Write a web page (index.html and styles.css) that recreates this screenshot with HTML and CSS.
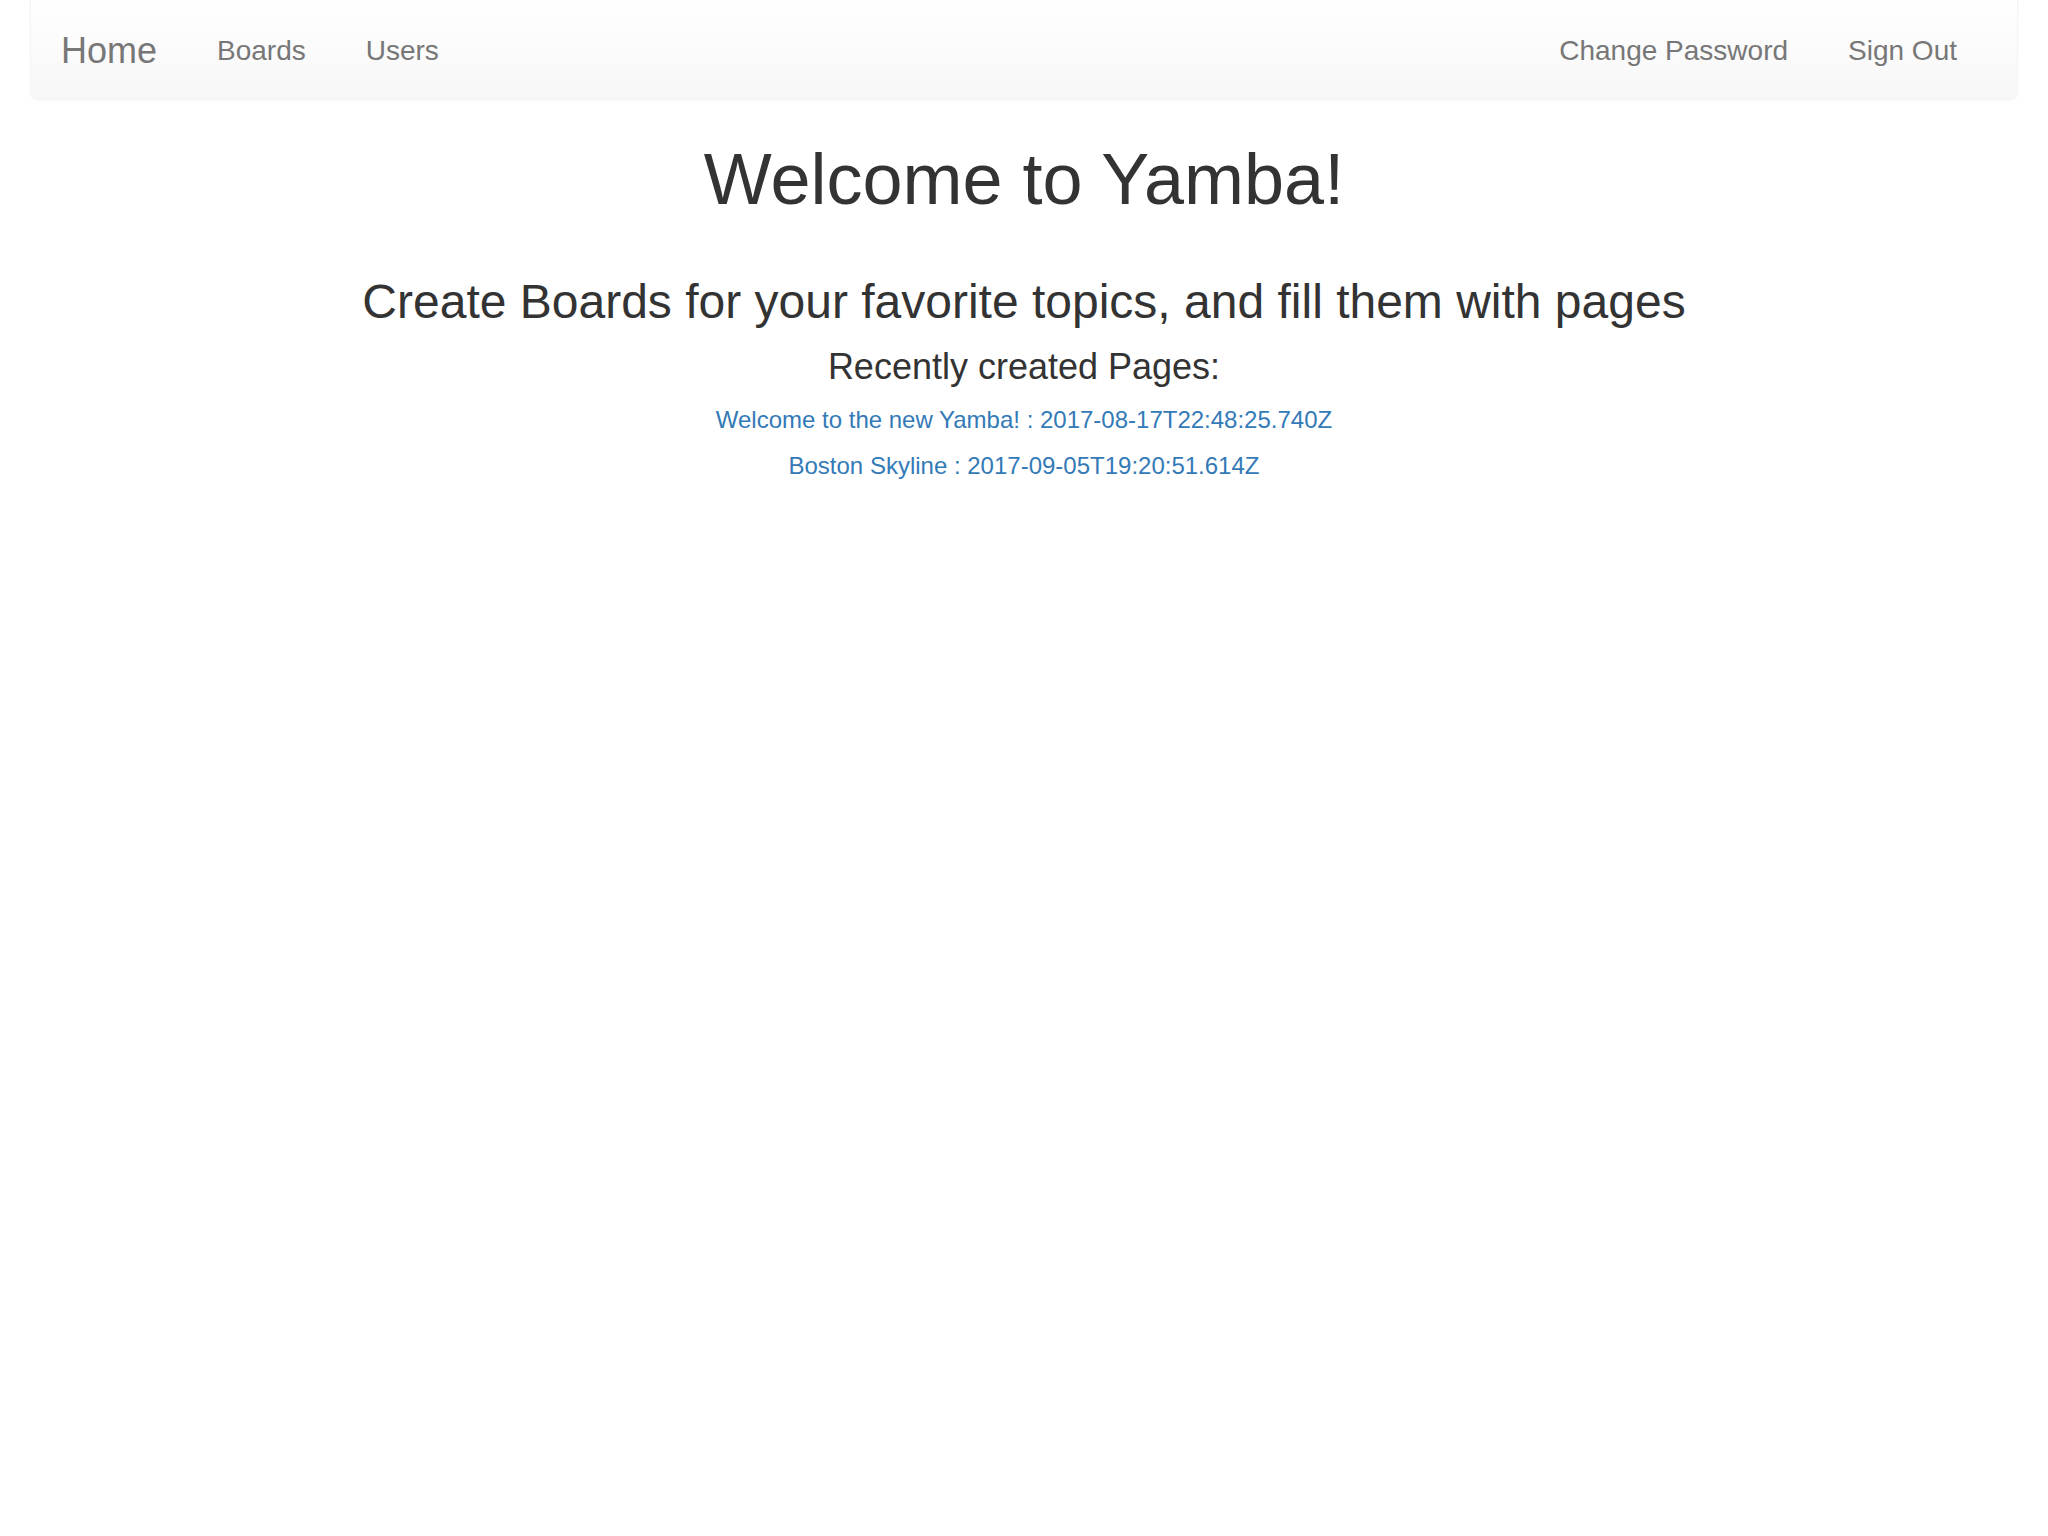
FILE: index.html
```html
<!DOCTYPE html>
<html>
<head>
<meta charset="utf-8">
<title>Yamba</title>
<link rel="stylesheet" href="styles.css">
</head>
<body>
<div class="page">
  <nav class="navbar">
    <div class="nav-left">
      <a class="brand" href="#">Home</a>
      <a class="nav-link" href="#">Boards</a>
      <a class="nav-link" href="#">Users</a>
    </div>
    <div class="nav-right">
      <a class="nav-link" href="#">Change Password</a>
      <a class="nav-link" href="#">Sign Out</a>
    </div>
  </nav>
  <main class="content">
    <h1 class="title">Welcome to Yamba!</h1>
    <h2 class="subtitle">Create Boards for your favorite topics, and fill them with pages</h2>
    <h4 class="recent-title">Recently created Pages:</h4>
    <div class="recent-list">
      <a class="recent-link" href="#">Welcome to the new Yamba! : 2017-08-17T22:48:25.740Z</a>
      <a class="recent-link" href="#">Boston Skyline : 2017-09-05T19:20:51.614Z</a>
    </div>
  </main>
</div>
</body>
</html>
```

FILE: styles.css
```css
html, body {
  margin: 0;
  padding: 0;
  background: #fff;
}
body {
  font-family: "Liberation Sans", Arial, Helvetica, sans-serif;
  font-size: 28px;
  line-height: 1.42857;
  color: #333;
}
a {
  text-decoration: none;
}
.page {
  padding: 0 30px;
}
.navbar {
  box-sizing: border-box;
  height: 100px;
  display: flex;
  justify-content: space-between;
  align-items: stretch;
  padding: 2px 30px 0;
  margin-bottom: 40px;
  border-radius: 0 0 8px 8px;
  border: 1px solid #f4f4f4;
  border-top: 0;
  background: linear-gradient(to bottom, #ffffff 0%, #f7f7f7 100%);
  box-shadow: 0 1px 3px rgba(0,0,0,.03);
}
.nav-left, .nav-right {
  display: flex;
  align-items: center;
}
.brand {
  font-size: 36px;
  line-height: 40px;
  padding: 0 30px 0 0;
  color: #777;
}
.nav-link {
  font-size: 28px;
  line-height: 40px;
  padding: 0 30px;
  color: #777;
}
.content {
  text-align: center;
}
.title {
  font-size: 72px;
  font-weight: 500;
  line-height: 1.1;
  margin: 40px 0 0;
}
.subtitle {
  font-size: 48px;
  font-weight: 500;
  line-height: 1.1;
  margin: 57px 0 0;
}
.recent-title {
  font-size: 36px;
  font-weight: 500;
  line-height: 1.1;
  margin: 18px 0 0;
}
.recent-list {
  display: flex;
  flex-direction: column;
  align-items: center;
  gap: 12px;
  margin-top: 16px;
}
.recent-link {
  color: #337ab7;
  font-size: 24px;
  line-height: 34px;
}
```
